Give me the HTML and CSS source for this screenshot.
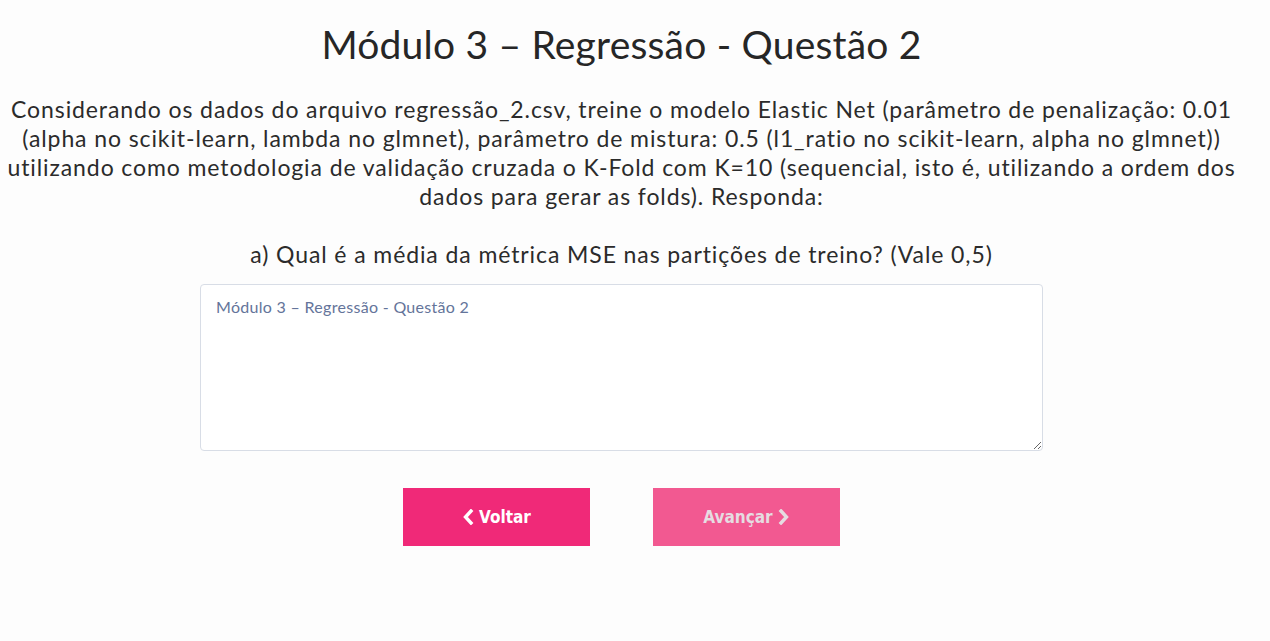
FILE: index.html
```html
<!DOCTYPE html>
<html lang="pt">
<head>
<meta charset="utf-8">
<title>Módulo 3 – Regressão - Questão 2</title>
<link rel="stylesheet" href="styles.css">
</head>
<body>
<main class="page">
  <h1 class="title">Módulo 3 – Regressão - Questão 2</h1>
  <p class="statement">Considerando os dados do arquivo regressão_2.csv, treine o modelo Elastic Net (parâmetro de penalização: 0.01 (alpha no scikit-learn, lambda no glmnet), parâmetro de mistura: 0.5 (l1_ratio no scikit-learn, alpha no glmnet)) utilizando como metodologia de validação cruzada o K-Fold com K=10 (sequencial, isto é, utilizando a ordem dos dados para gerar as folds). Responda:</p>
  <p class="question">a) Qual é a média da métrica MSE nas partições de treino? (Vale 0,5)</p>
  <textarea class="answer" placeholder="Módulo 3 – Regressão - Questão 2"></textarea>
  <div class="actions">
    <button class="btn btn-primary" type="button">
      <svg class="chev" viewBox="0 0 12 16" width="12" height="16"><path d="M9 2 L3.5 8 L9 14" fill="none" stroke="currentColor" stroke-width="3.4" stroke-linecap="square"/></svg>
      <span>Voltar</span>
    </button>
    <button class="btn btn-disabled" type="button">
      <span>Avançar</span>
      <svg class="chev" viewBox="0 0 12 16" width="12" height="16"><path d="M3 2 L8.5 8 L3 14" fill="none" stroke="currentColor" stroke-width="3.4" stroke-linecap="square"/></svg>
    </button>
  </div>
</main>
</body>
</html>
```

FILE: styles.css
```css
html, body {
  margin: 0;
  padding: 0;
  background: #fdfdfd;
}
body {
  font-family: Lato, "Open Sans", sans-serif;
  color: #2b2b2b;
}
.page {
  width: 1243px;
  display: flex;
  flex-direction: column;
  align-items: center;
  padding-top: 20px;
}
.title {
  margin: 0;
  font-weight: 400;
  font-size: 39px;
  line-height: 48px;
  color: #262626;
  letter-spacing: 0.2px;
}
.statement {
  margin: 27px 0 0;
  font-size: 23px;
  line-height: 29px;
  letter-spacing: 0.9px;
  text-align: center;
  width: 1243px;
}
.question {
  margin: 29px 0 0;
  font-size: 23px;
  line-height: 29px;
  letter-spacing: 0.9px;
  text-align: center;
}
.answer {
  margin-top: 15px;
  width: 843px;
  height: 167px;
  box-sizing: border-box;
  border: 1px solid #d8dde6;
  border-radius: 4px;
  background: #ffffff;
  padding: 12px 15px;
  font-family: Lato, sans-serif;
  font-size: 16px;
  letter-spacing: 0.3px;
  color: #333;
  resize: vertical;
}
.answer::placeholder {
  color: #64749a;
}
.actions {
  display: flex;
  gap: 63px;
  margin-top: 37px;
}
.btn {
  width: 187px;
  height: 58px;
  border: 0;
  border-radius: 0;
  display: flex;
  align-items: center;
  justify-content: center;
  gap: 5px;
  font-family: "DejaVu Sans Condensed", "DejaVu Sans", sans-serif;
  font-weight: bold;
  font-size: 17px;
  color: #ffffff;
  cursor: pointer;
  padding: 0;
}
.btn-primary {
  background: #f02978;
}
.btn-disabled {
  background: #f25991;
  color: #e6dce1;
  cursor: default;
}
.chev {
  display: block;
}
```
